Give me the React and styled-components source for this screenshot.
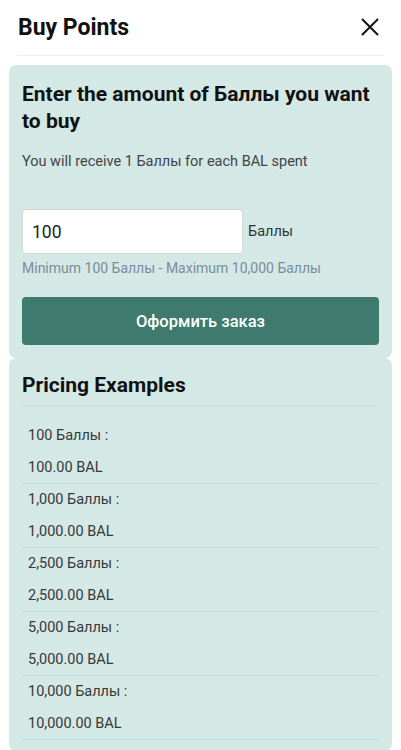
import React from "react";
import styled, { createGlobalStyle } from "styled-components";

const Global = createGlobalStyle`
  body {
    margin: 0;
    background: #ffffff;
    font-family: Roboto, "Liberation Sans", sans-serif;
    color: #222;
  }
`;

const pricing = [
  { points: "100", price: "100.00" },
  { points: "1,000", price: "1,000.00" },
  { points: "2,500", price: "2,500.00" },
  { points: "5,000", price: "5,000.00" },
  { points: "10,000", price: "10,000.00" },
];

const App = () => {
  return (
    <>
      <Global />
      <Page>
        <Header>
          <Title>Buy Points</Title>
          <CloseButton aria-label="close">
            <svg width="20" height="20" viewBox="0 0 20 20">
              <path
                d="M2.5 2.5 L17.5 17.5 M17.5 2.5 L2.5 17.5"
                stroke="#111"
                strokeWidth="2"
                strokeLinecap="round"
              />
            </svg>
          </CloseButton>
        </Header>

        <Card>
          <CardTitle>Enter the amount of Баллы you want to buy</CardTitle>
          <Subtext>You will receive 1 Баллы for each BAL spent</Subtext>
          <InputRow>
            <AmountInput defaultValue="100" />
            <Unit>Баллы</Unit>
          </InputRow>
          <Helper>Minimum 100 Баллы - Maximum 10,000 Баллы</Helper>
          <SubmitButton>Оформить заказ</SubmitButton>
        </Card>

        <Card $tight>
          <SectionTitle>Pricing Examples</SectionTitle>
          <PriceList>
            {pricing.map((p) => (
              <PriceRow key={p.points}>
                <PriceLine>{p.points} Баллы :</PriceLine>
                <PriceLine>{p.price} BAL</PriceLine>
              </PriceRow>
            ))}
          </PriceList>
        </Card>
      </Page>
    </>
  );
};

const Page = styled.div`
  display: flex;
  flex-direction: column;
  padding: 0 9px;
`;

const Header = styled.div`
  display: flex;
  align-items: center;
  justify-content: space-between;
  height: 55px;
  margin: 0 8px 9px;
  padding: 0 1px;
  border-bottom: 1px solid #eeeeee;
`;

const Title = styled.h1`
  margin: 0;
  font-size: 23px;
  font-weight: 700;
  color: #111;
`;

const CloseButton = styled.button`
  display: flex;
  align-items: center;
  justify-content: center;
  border: none;
  background: none;
  padding: 0;
  margin-right: 3px;
  margin-bottom: 2px;
  cursor: pointer;
`;

const Card = styled.div`
  display: flex;
  flex-direction: column;
  background: #d4e8e5;
  border-radius: 7px;
  padding: ${(p) => (p.$tight ? "14px 13px 11px" : "16px 13px 13px")};
`;

const CardTitle = styled.h2`
  margin: 0;
  font-size: 21px;
  line-height: 27px;
  font-weight: 700;
  color: #111;
`;

const Subtext = styled.p`
  margin: 17px 0 0;
  font-size: 14.5px;
  line-height: 20px;
  color: #444;
`;

const InputRow = styled.div`
  display: flex;
  align-items: center;
  gap: 5px;
  margin-top: 37px;
`;

const AmountInput = styled.input`
  box-sizing: border-box;
  width: 221px;
  height: 45px;
  padding: 0 9px;
  border: 1px solid #d6d6d6;
  border-radius: 4px;
  background: #fff;
  font-family: inherit;
  font-size: 17.5px;
  color: #222;
  outline: none;
`;

const Unit = styled.span`
  font-size: 14.5px;
  color: #333;
`;

const Helper = styled.p`
  margin: 5px 0 0;
  font-size: 14px;
  line-height: 18px;
  color: #7b8c9a;
`;

const SubmitButton = styled.button`
  margin-top: 20px;
  height: 48px;
  border: none;
  border-radius: 4px;
  background: #3e7a6e;
  color: #fff;
  font-family: inherit;
  font-size: 16.5px;
  font-weight: 500;
  cursor: pointer;
`;

const SectionTitle = styled.h2`
  margin: 0;
  padding-bottom: 6px;
  font-size: 21px;
  line-height: 27px;
  font-weight: 700;
  color: #111;
  border-bottom: 1px solid #c4dbd7;
`;

const PriceList = styled.div`
  display: flex;
  flex-direction: column;
  padding-top: 14px;
`;

const PriceRow = styled.div`
  display: flex;
  flex-direction: column;
  padding: 0 6px;
  border-bottom: 1px solid #c4dbd7;
`;

const PriceLine = styled.span`
  font-size: 14.5px;
  line-height: 31.5px;
  color: #383838;
`;

export default App;
